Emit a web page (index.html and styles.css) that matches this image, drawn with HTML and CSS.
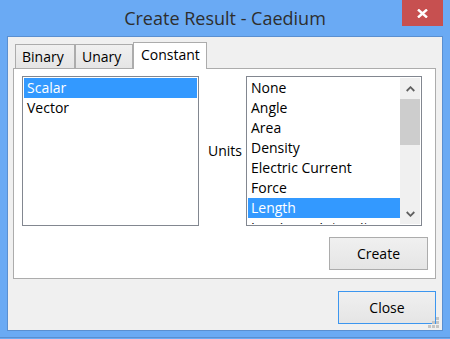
FILE: index.html
```html
<!DOCTYPE html>
<html>
<head>
<meta charset="utf-8">
<title>Create Result - Caedium</title>
<link rel="stylesheet" href="styles.css">
</head>
<body>
<div class="window">
  <div class="titlebar">
    <div class="spacer"></div>
    <div class="title">Create Result - Caedium</div>
    <div class="caption">
      <button class="close-x" aria-label="Close">
        <svg width="11" height="9" viewBox="0 0 11 9"><path d="M1 0.5 L10 8.5 M10 0.5 L1 8.5" stroke="#fff" stroke-width="2.4" fill="none"/></svg>
      </button>
    </div>
  </div>
  <div class="client">
    <div class="tabs">
      <div class="tab tab-binary">Binary</div>
      <div class="tab tab-unary">Unary</div>
      <div class="tab tab-active">Constant</div>
    </div>
    <div class="panel">
      <div class="row">
        <ul class="list list-kind">
          <li class="sel">Scalar</li>
          <li>Vector</li>
        </ul>
        <div class="units-label">Units</div>
        <div class="list list-units">
          <ul class="items">
            <li>None</li>
            <li>Angle</li>
            <li>Area</li>
            <li>Density</li>
            <li>Electric Current</li>
            <li>Force</li>
            <li class="sel">Length</li>
            <li>Luminous Intensity</li>
          </ul>
          <div class="scrollbar">
            <div class="sb-btn"><svg width="9" height="6" viewBox="0 0 9 6"><path d="M0.7 5 L4.5 1.2 L8.3 5" stroke="#606060" stroke-width="1.8" fill="none"/></svg></div>
            <div class="sb-track"><div class="sb-thumb"></div></div>
            <div class="sb-btn"><svg width="9" height="6" viewBox="0 0 9 6"><path d="M0.7 1 L4.5 4.8 L8.3 1" stroke="#606060" stroke-width="1.8" fill="none"/></svg></div>
          </div>
        </div>
      </div>
      <div class="actions"><button class="btn">Create</button></div>
    </div>
    <div class="footer"><button class="btn btn-default">Close</button></div>
    <svg class="grip" width="11" height="11" viewBox="0 0 11 11">
      <rect x="8" y="0" width="3" height="3" fill="#c4c4c4"/>
      <rect x="4" y="4" width="3" height="3" fill="#c4c4c4"/>
      <rect x="8" y="4" width="3" height="3" fill="#c4c4c4"/>
      <rect x="0" y="8" width="3" height="3" fill="#c4c4c4"/>
      <rect x="4" y="8" width="3" height="3" fill="#c4c4c4"/>
      <rect x="8" y="8" width="3" height="3" fill="#c4c4c4"/>
    </svg>
  </div>
</div>
</body>
</html>
```
FILE: styles.css
```css
html, body {
  margin: 0;
  padding: 0;
  background: #6aaaf4;
}
body {
  font-family: "Open Sans", "Noto Sans", sans-serif;
  font-size: 14px;
  color: #000;
}
.window {
  width: 450px;
  height: 338px;
  box-sizing: border-box;
  border-bottom: 1px solid #5a8fd0;
  background: #6aaaf4;
  display: flex;
  flex-direction: column;
}
.titlebar {
  height: 36px;
  flex: none;
  display: grid;
  grid-template-columns: 1fr auto 1fr;
  align-items: start;
}
.title {
  font-size: 18px;
  line-height: 28px;
  padding-top: 4px;
  color: #2e2e2e;
  white-space: nowrap;
}
.caption {
  display: flex;
  justify-content: flex-end;
  padding-right: 7px;
}
.close-x {
  width: 41px;
  height: 26px;
  border: 0;
  padding: 0;
  background: #c75050;
  display: flex;
  align-items: center;
  justify-content: center;
}
.client {
  margin: 0 7px;
  height: 295px;
  flex: none;
  box-sizing: border-box;
  border: 1px solid #5a8fd0;
  background: #f0f0f0;
  padding: 5px 6px 6px 5px;
  display: flex;
  flex-direction: column;
  position: relative;
}
.tabs {
  display: flex;
  align-items: flex-end;
  height: 26px;
  flex: none;
  padding-left: 2px;
}
.tab {
  box-sizing: border-box;
  height: 24px;
  border: 1px solid #acacac;
  border-bottom: none;
  background: linear-gradient(#f0f0f0, #e5e5e5);
  padding: 2px 0 0 6px;
  font-size: 14px;
  line-height: 20px;
  white-space: nowrap;
}
.tab-binary { width: 60px; }
.tab-unary { width: 58px; }
.tab-active {
  width: 74px;
  height: 27px;
  margin-bottom: -1px;
  background: #fff;
  padding-left: 7px;
  position: relative;
  z-index: 1;
}
.panel {
  height: 211px;
  flex: none;
  box-sizing: border-box;
  border: 1px solid #acacac;
  background: #fff;
  padding: 7px 7px 8px 8px;
  display: flex;
  flex-direction: column;
}
.row {
  display: flex;
  height: 150px;
  flex: none;
}
.list {
  box-sizing: border-box;
  height: 150px;
  border: 1px solid #828790;
  padding: 1px;
  background: #fff;
  margin: 0;
  list-style: none;
}
.list li, .items li {
  font-size: 14px;
  line-height: 20px;
  height: 20px;
  padding-left: 3px;
  white-space: nowrap;
}
.sel {
  background: #3399ff;
  color: #fff;
}
.list-kind { width: 177px; }
.units-label {
  width: 47px;
  box-sizing: border-box;
  padding-left: 9px;
  align-self: center;
  line-height: 20px;
}
.list-units {
  width: 176px;
  display: flex;
}
.items {
  flex: 1;
  min-width: 0;
  overflow: hidden;
  margin: 0;
  padding: 0;
  list-style: none;
}
.scrollbar {
  width: 20px;
  flex: none;
  background: #f0f0f0;
  display: flex;
  flex-direction: column;
}
.sb-btn {
  height: 21px;
  flex: none;
  display: flex;
  align-items: center;
  justify-content: center;
}
.sb-track { flex: 1; }
.sb-thumb {
  height: 46px;
  background: #cdcdcd;
}
.actions {
  display: flex;
  justify-content: flex-end;
  margin-top: 11px;
}
.btn {
  width: 99px;
  height: 33px;
  box-sizing: border-box;
  border: 1px solid #acacac;
  background: linear-gradient(#f0f0f0, #e5e5e5);
  font-family: "Open Sans", "Noto Sans", sans-serif;
  font-size: 14px;
  color: #000;
  padding: 0;
}
.btn-default {
  width: 98px;
  border-color: #3c96ef;
}
.footer {
  display: flex;
  justify-content: flex-end;
  margin-top: 12px;
}
.grip {
  position: absolute;
  right: 3px;
  bottom: 2px;
}
```
